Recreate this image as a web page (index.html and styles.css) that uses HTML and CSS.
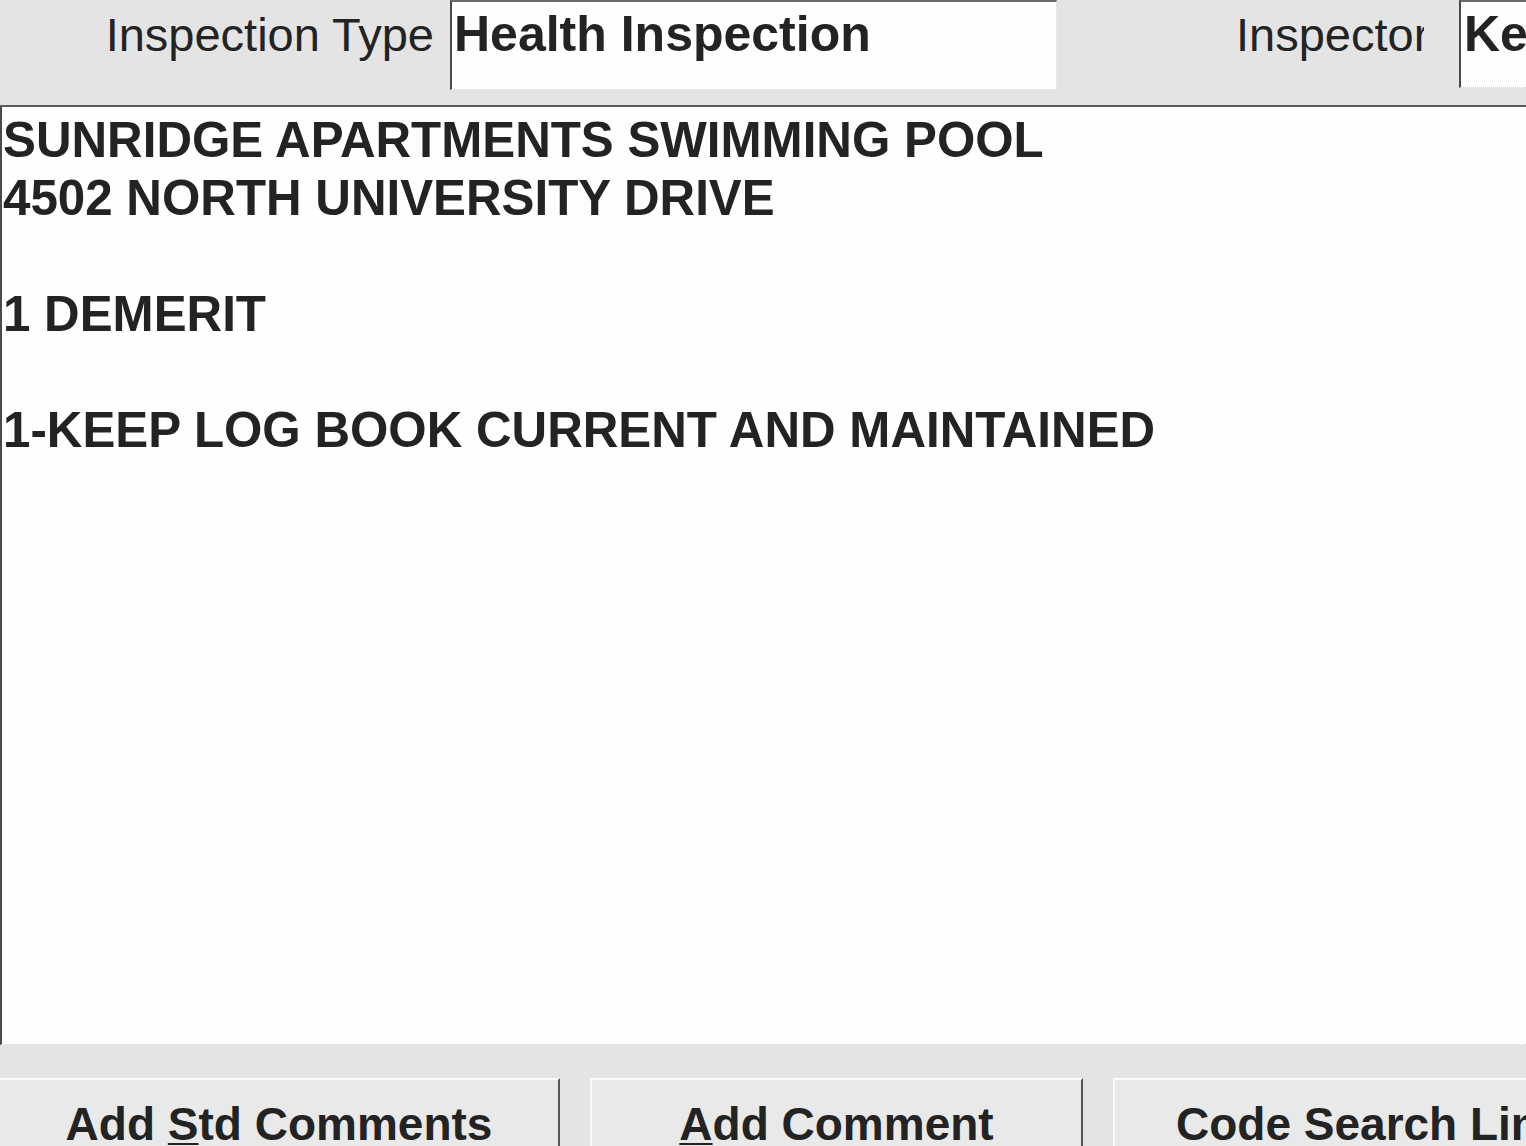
FILE: index.html
```html
<!DOCTYPE html>
<html lang="en">
<head>
<meta charset="utf-8">
<title>Inspection Comments</title>
<link rel="stylesheet" href="styles.css">
</head>
<body>
<div class="window">
  <div class="topbar">
    <div class="lbl lbl-type">Inspection Type</div>
    <div class="field field-type">Health Inspection</div>
    <div class="lbl lbl-insp">Inspector</div>
    <div class="field field-insp">Kevin</div>
  </div>
  <div class="comments">
    <div class="line">SUNRIDGE APARTMENTS SWIMMING POOL</div>
    <div class="line">4502 NORTH UNIVERSITY DRIVE</div>
    <div class="line">&nbsp;</div>
    <div class="line">1 DEMERIT</div>
    <div class="line">&nbsp;</div>
    <div class="line">1-KEEP LOG BOOK CURRENT AND MAINTAINED</div>
  </div>
  <div class="buttons">
    <div class="btn btn-std">Add <u>S</u>td Comments</div>
    <div class="btn btn-add"><u>A</u>dd Comment</div>
    <div class="btn btn-code">Code Search Link</div>
  </div>
</div>
</body>
</html>
```
FILE: styles.css
```css
html, body {
  margin: 0;
  padding: 0;
  background: #e4e4e4;
  overflow: hidden;
}
.window {
  width: 1526px;
  height: 1146px;
  overflow: hidden;
  font-family: "Liberation Sans", Arial, sans-serif;
  color: #232323;
  background: #e4e4e4;
}
.topbar {
  display: flex;
  align-items: flex-start;
  border-bottom: 2px solid #5a5a5a;
  box-sizing: border-box;
  height: 107px;
}
.lbl {
  font-size: 47px;
  font-weight: 400;
  line-height: 54px;
  padding-top: 8px;
  white-space: nowrap;
}
.lbl-type {
  width: 434px;
  text-align: right;
  margin-right: 16px;
}
.lbl-insp {
  width: 188px;
  margin-left: 179px;
  margin-right: 35px;
  overflow: hidden;
}
.field {
  background: #fefefe;
  height: 88px;
  box-sizing: border-box;
  border-top: 2px solid #6a6a6a;
  border-left: 2px solid #4a4a4a;
  border-bottom: 1px dotted #cfcfcf;
  font-size: 50px;
  font-weight: 700;
  line-height: 56px;
  padding-top: 4px;
  padding-left: 2px;
  white-space: nowrap;
  overflow: hidden;
}
.field-type {
  width: 607px;
  height: 90px;
  border-right: 1px solid #e8e8e8;
}
.field-insp {
  flex: 1;
  padding-left: 3px;
}
.comments {
  height: 938px;
  box-sizing: border-box;
  background: #fefefe;
  border-left: 2px solid #4a4a4a;
  border-bottom: 1px dotted #cfcfcf;
  padding-top: 4px;
  padding-left: 1px;
  font-size: 49.3px;
  font-weight: 700;
  line-height: 58px;
  white-space: nowrap;
}
.buttons {
  display: flex;
  gap: 30px;
  margin-top: 33px;
  margin-left: -2px;
}
.btn {
  height: 80px;
  box-sizing: border-box;
  background: #e9e9e9;
  border-top: 2px solid #fbfbfb;
  border-left: 2px solid #fbfbfb;
  border-right: 2px solid #555;
  font-size: 46px;
  font-weight: 700;
  line-height: 53px;
  padding-top: 18px;
  text-align: center;
  white-space: nowrap;
  flex: none;
}
.btn u {
  text-decoration-thickness: 2px;
  text-underline-offset: 3px;
}
.btn-std { width: 562px; }
.btn-add { width: 493px; }
.btn-code {
  width: 480px;
  text-align: left;
  padding-left: 61px;
  border-right: none;
}
```
